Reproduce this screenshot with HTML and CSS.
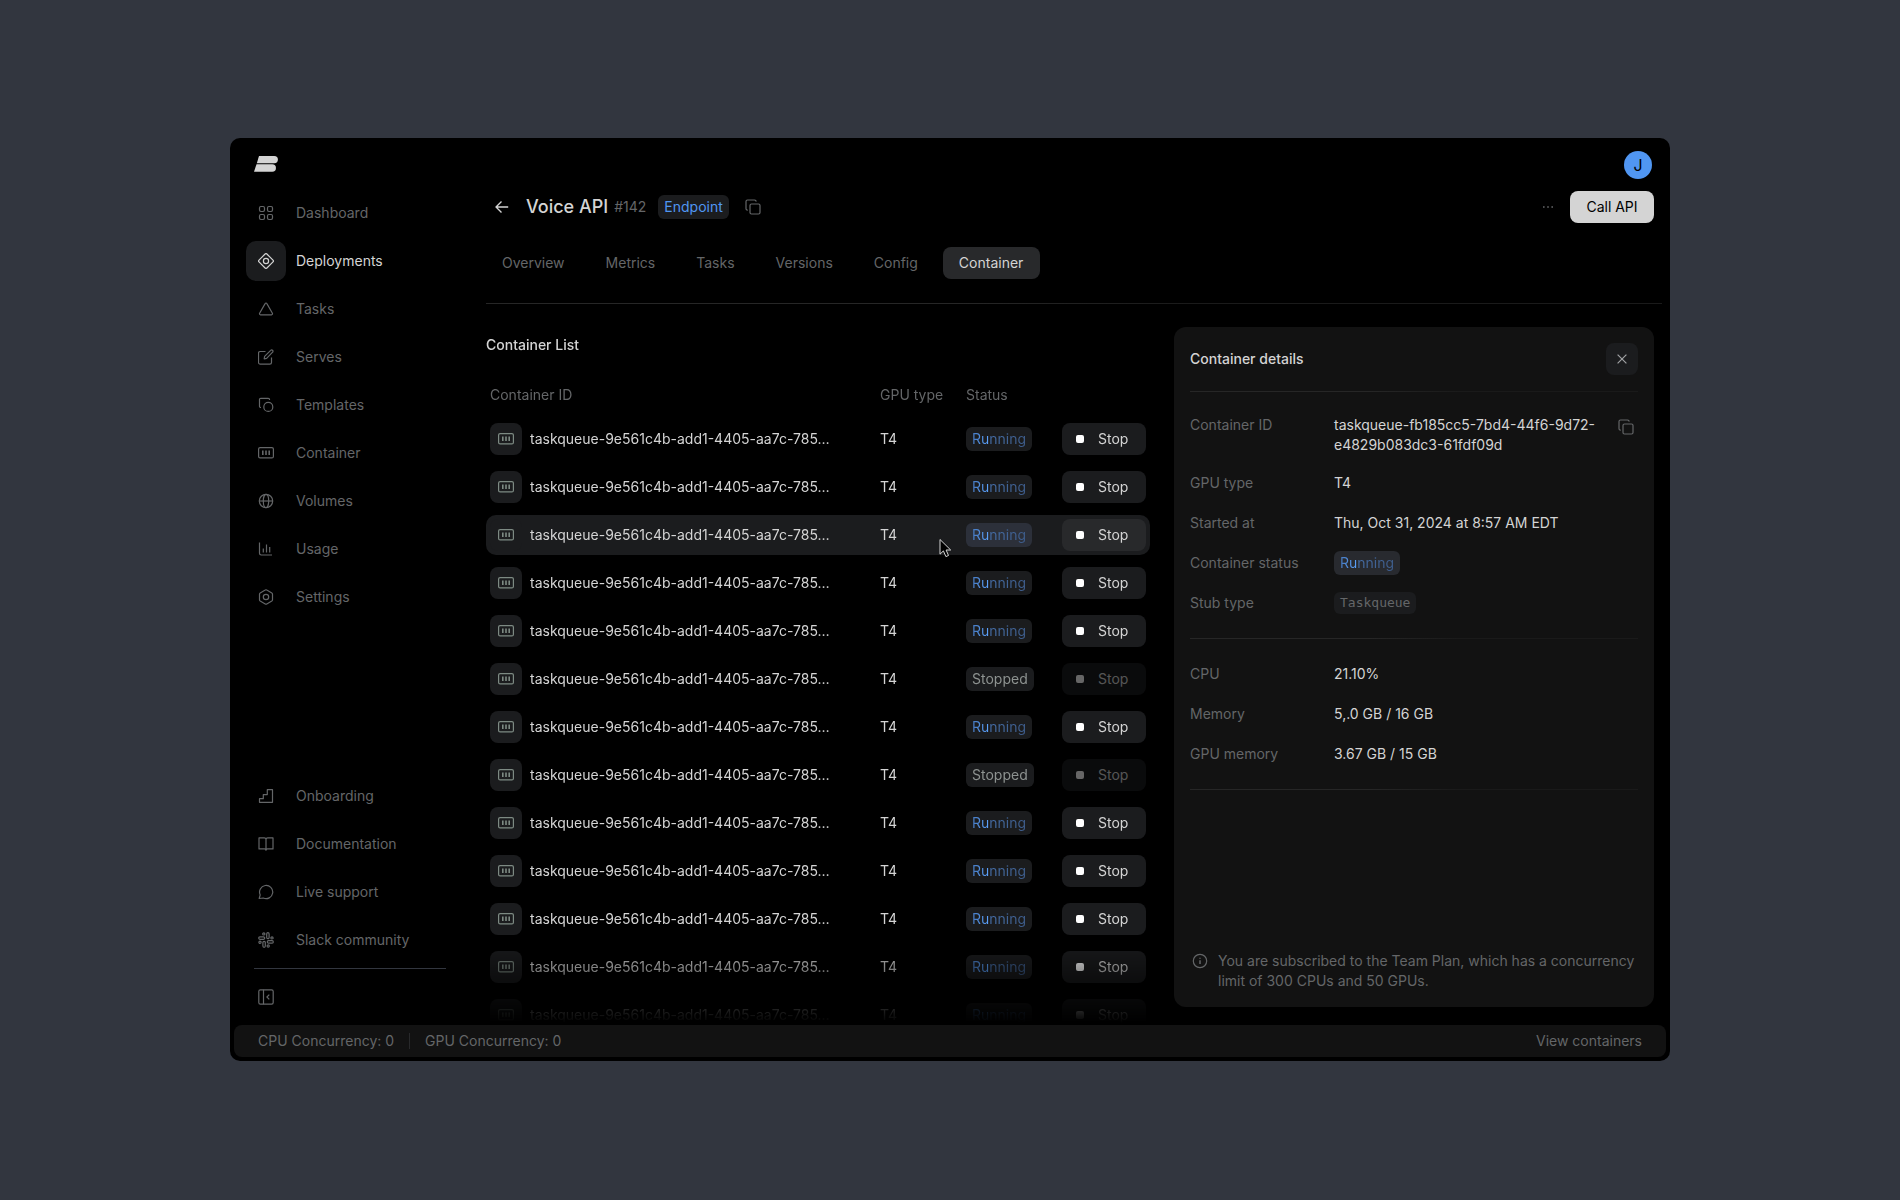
FILE: index.html
```
<!DOCTYPE html>
<html lang="en">
<head>
  <meta charset="UTF-8" />
  <meta name="viewport" content="width=device-width, initial-scale=1.0" />
  <title>Voice API - Container</title>
  <link rel="stylesheet" href="styles.css">
</head>
<body>

  <!-- icon sprite -->
  <svg class="sprite" aria-hidden="true">
    <symbol id="i-dashboard" viewBox="0 0 16 16">
      <rect x="1.5" y="1.5" width="5" height="5" rx="1.4"/><rect x="9.5" y="1.5" width="5" height="5" rx="1.4"/>
      <rect x="1.5" y="9.5" width="5" height="5" rx="1.4"/><rect x="9.5" y="9.5" width="5" height="5" rx="1.4"/>
    </symbol>
    <symbol id="i-deployments" viewBox="0 0 16 16">
      <path d="M7.1 1 1 7.1a1.3 1.3 0 0 0 0 1.8L7.1 15a1.3 1.3 0 0 0 1.8 0L15 8.9a1.3 1.3 0 0 0 0-1.8L8.9 1a1.3 1.3 0 0 0-1.8 0z"/><circle cx="8" cy="8" r="2.6"/>
    </symbol>
    <symbol id="i-tasks" viewBox="0 0 16 16">
      <path d="M7.1 2.6 1.6 12.3a1 1 0 0 0 .9 1.5h11a1 1 0 0 0 .9-1.5L8.9 2.6a1 1 0 0 0-1.8 0z"/>
    </symbol>
    <symbol id="i-serves" viewBox="0 0 16 16">
      <path d="M7.5 2.5H2.2A1.7 1.7 0 0 0 .5 4.2v9.2A1.7 1.7 0 0 0 2.2 15.1h9.6a1.7 1.7 0 0 0 1.7-1.7V8.5"/>
      <path d="m6.2 9.9.4-2.5 6.1-6.1a1.3 1.3 0 0 1 1.9 0 1.3 1.3 0 0 1 0 1.9L8.6 9.4z"/>
    </symbol>
    <symbol id="i-templates" viewBox="0 0 16 16">
      <path d="M3 10.5h-.2A1.3 1.3 0 0 1 1.5 9.2V2.6A1.3 1.3 0 0 1 2.8 1.3h7.4A1.3 1.3 0 0 1 11.5 2.6v.5"/><circle cx="10.3" cy="9.9" r="4.5"/>
    </symbol>
    <symbol id="i-container" viewBox="0 0 16 16">
      <rect x=".6" y="2.6" width="14.8" height="10.3" rx="1.5"/><path d="M4.8 5.5v4.5M8 5.5v4.5M11.2 5.5v4.5" stroke-width="1.6"/>
    </symbol>
    <symbol id="i-volumes" viewBox="0 0 16 16">
      <circle cx="8" cy="8" r="6.7"/><ellipse cx="8" cy="8" rx="2.7" ry="6.7"/><path d="M1.3 8h13.4"/>
    </symbol>
    <symbol id="i-usage" viewBox="0 0 16 16">
      <path d="M1.5 1.5v10.8A1.7 1.7 0 0 0 3.2 14h10.8M5.3 7.5v4M8.5 3.5v8M11.7 6v5.5"/>
    </symbol>
    <symbol id="i-settings" viewBox="0 0 16 16">
      <path d="M7.2 1.1 2.2 3.9a1.5 1.5 0 0 0-.7 1.3v5.6a1.5 1.5 0 0 0 .7 1.3l5 2.8a1.5 1.5 0 0 0 1.6 0l5-2.8a1.5 1.5 0 0 0 .7-1.3V5.2a1.5 1.5 0 0 0-.7-1.3l-5-2.8a1.5 1.5 0 0 0-1.6 0z"/><circle cx="8" cy="8" r="2.7"/>
    </symbol>
    <symbol id="i-onboarding" viewBox="0 0 16 16">
      <path d="M1.5 14.3v-3.6h3.8V6.6h4V1.7h5.2v12.6z"/>
    </symbol>
    <symbol id="i-docs" viewBox="0 0 16 16">
      <path d="M8 3.4A1.7 1.7 0 0 0 6.3 1.9H1v11h5.5A1.6 1.6 0 0 1 8 14.3a1.6 1.6 0 0 1 1.5-1.4H15v-11H9.7A1.7 1.7 0 0 0 8 3.4zV14"/>
    </symbol>
    <symbol id="i-chat" viewBox="0 0 16 16">
      <path d="M1.2 14.5l1-3.6A6.6 6.6 0 1 1 5.3 14z"/>
    </symbol>
    <symbol id="i-slack" viewBox="0 0 16 16">
      <rect x="8.7" y=".7" width="2.4" height="6" rx="1.2"/><rect x="4.9" y="9.3" width="2.4" height="6" rx="1.2"/>
      <rect x=".7" y="4.9" width="6" height="2.4" rx="1.2"/><rect x="9.3" y="8.7" width="6" height="2.4" rx="1.2"/>
      <circle cx="5.8" cy="1.9" r="1.1"/><circle cx="14" cy="5.9" r="1.1"/><circle cx="10.2" cy="14" r="1.1"/><circle cx="2" cy="10.2" r="1.1"/>
    </symbol>
    <symbol id="i-collapse" viewBox="0 0 16 16">
      <rect x=".8" y=".8" width="14.4" height="14.4" rx="1.6"/><path d="M5.500.8v14.400M11.300 5.600 8.900 8l2.400 2.400"/>
    </symbol>
    <symbol id="i-copy" viewBox="0 0 16 16">
      <rect x="5" y="5" width="10" height="10" rx="1.5"/><path d="M2.8 11A1.5 1.5 0 0 1 1 9.5v-7A1.5 1.5 0 0 1 2.5 1h7A1.5 1.5 0 0 1 11 2.7"/>
    </symbol>
    <symbol id="i-back" viewBox="0 0 16 16">
      <path d="M14.2 8H2M7.5 2.5 2 8l5.5 5.5"/>
    </symbol>
    <symbol id="i-close" viewBox="0 0 16 16">
      <path d="m3.6 3.6 8.8 8.8M12.4 3.6l-8.8 8.8"/>
    </symbol>
    <symbol id="i-info" viewBox="0 0 16 16">
      <circle cx="8" cy="8" r="6.7"/><path d="M8 7.3v3.8M8 4.7v1" stroke-width="1.5"/>
    </symbol>
    <symbol id="i-more" viewBox="0 0 16 16">
      <path d="M3 8h1.6M7.2 8h1.6M11.400 8H13" stroke-width="1.6"/>
    </symbol>
  </svg>

  <div class="window">
    <div class="layout">
      <aside class="sidebar">
        <svg class="logo" viewBox="0 0 24 16" role="img" aria-label="Home">
          <path d="M5 0h15.3a3.6 3.6 0 0 1 0 7.2H2.8z"/><path d="M2.5 8.3h15.7a3.7 3.7 0 0 1 0 7.5H0z"/>
        </svg>
        <nav class="nav">
          <a class="nav-item" href="#"><span class="nav-icon"><svg class="icon"><use href="#i-dashboard"/></svg></span>Dashboard</a>
          <a class="nav-item active" href="#"><span class="nav-icon"><svg class="icon"><use href="#i-deployments"/></svg></span>Deployments</a>
          <a class="nav-item" href="#"><span class="nav-icon"><svg class="icon"><use href="#i-tasks"/></svg></span>Tasks</a>
          <a class="nav-item" href="#"><span class="nav-icon"><svg class="icon"><use href="#i-serves"/></svg></span>Serves</a>
          <a class="nav-item" href="#"><span class="nav-icon"><svg class="icon"><use href="#i-templates"/></svg></span>Templates</a>
          <a class="nav-item" href="#"><span class="nav-icon"><svg class="icon"><use href="#i-container"/></svg></span>Container</a>
          <a class="nav-item" href="#"><span class="nav-icon"><svg class="icon"><use href="#i-volumes"/></svg></span>Volumes</a>
          <a class="nav-item" href="#"><span class="nav-icon"><svg class="icon"><use href="#i-usage"/></svg></span>Usage</a>
          <a class="nav-item" href="#"><span class="nav-icon"><svg class="icon"><use href="#i-settings"/></svg></span>Settings</a>
        </nav>
        <nav class="nav nav-bottom">
          <a class="nav-item" href="#"><span class="nav-icon"><svg class="icon"><use href="#i-onboarding"/></svg></span>Onboarding</a>
          <a class="nav-item" href="#"><span class="nav-icon"><svg class="icon"><use href="#i-docs"/></svg></span>Documentation</a>
          <a class="nav-item" href="#"><span class="nav-icon"><svg class="icon"><use href="#i-chat"/></svg></span>Live support</a>
          <a class="nav-item" href="#"><span class="nav-icon"><svg class="icon"><use href="#i-slack"/></svg></span>Slack community</a>
        </nav>
        <button class="collapse" type="button" aria-label="Collapse sidebar"><svg class="icon"><use href="#i-collapse"/></svg></button>
      </aside>

      <main class="main">
        <div class="topbar"><button class="avatar" type="button">J</button></div>

        <header class="header">
          <button class="icon-btn" type="button" aria-label="Back"><svg class="icon back"><use href="#i-back"/></svg></button>
          <h1>Voice API</h1>
          <span class="version">#142</span>
          <span class="badge badge-endpoint">Endpoint</span>
          <button class="icon-btn" type="button" aria-label="Copy"><svg class="icon"><use href="#i-copy"/></svg></button>
          <div class="header-actions">
            <button class="icon-btn" type="button" aria-label="More"><svg class="icon"><use href="#i-more"/></svg></button>
            <button class="call-btn" type="button">Call API</button>
          </div>
        </header>

        <nav class="tabs">
          <a class="tab" href="#">Overview</a>
          <a class="tab" href="#">Metrics</a>
          <a class="tab" href="#">Tasks</a>
          <a class="tab" href="#">Versions</a>
          <a class="tab" href="#">Config</a>
          <a class="tab active" href="#">Container</a>
        </nav>
        <hr class="divider">

        <div class="content">
          <section class="list">
            <h2>Container List</h2>
            <table class="table">
              <thead>
                <tr><th class="col-id">Container ID</th><th class="col-gpu">GPU type</th><th class="col-status">Status</th><th class="col-action"></th></tr>
              </thead>
              <tbody id="rows"></tbody>
            </table>
          </section>

          <aside class="panel">
            <div class="panel-head">
              <h2>Container details</h2>
              <button class="close-btn" type="button" aria-label="Close"><svg class="icon"><use href="#i-close"/></svg></button>
            </div>
            <hr class="divider">
            <dl class="details">
              <div class="detail">
                <dt>Container ID</dt>
                <dd>taskqueue-fb185cc5-7bd4-44f6-9d72-<wbr>e4829b083dc3-61fdf09d</dd>
                <dd class="detail-copy"><button class="icon-btn" type="button" aria-label="Copy ID"><svg class="icon"><use href="#i-copy"/></svg></button></dd>
              </div>
              <div class="detail"><dt>GPU type</dt><dd>T4</dd></div>
              <div class="detail"><dt>Started at</dt><dd>Thu, Oct 31, 2024 at 8:57 AM EDT</dd></div>
              <div class="detail"><dt>Container status</dt><dd><span class="badge badge-light"><span class="shine">Running</span></span></dd></div>
              <div class="detail"><dt>Stub type</dt><dd><span class="badge badge-code">Taskqueue</span></dd></div>
            </dl>
            <hr class="divider">
            <dl class="details">
              <div class="detail"><dt>CPU</dt><dd>21.10%</dd></div>
              <div class="detail"><dt>Memory</dt><dd>5,.0 GB / 16 GB</dd></div>
              <div class="detail"><dt>GPU memory</dt><dd>3.67 GB / 15 GB</dd></div>
            </dl>
            <hr class="divider">
            <div class="note">
              <svg class="icon"><use href="#i-info"/></svg>
              <p>You are subscribed to the Team Plan, which has a concurrency limit of 300 CPUs and 50 GPUs.</p>
            </div>
          </aside>
        </div>
      </main>
    </div>

    <footer class="statusbar">
      <span>CPU Concurrency: 0</span>
      <span class="sep"></span>
      <span>GPU Concurrency: 0</span>
      <a class="view-link" href="#">View containers</a>
    </footer>
  </div>

  <script>
    const rows = document.getElementById("rows");
    const id = "taskqueue-9e561c4b-add1-4405-aa7c-785…";
    const stopped = [5, 7];
    const hovered = 2;

    const cursor = `<svg class="cursor" viewBox="0 0 13 20"><path d="M1 1.5v14.7l3.4-3.3 2.5 5.7 2.6-1.1-2.4-5.5h4.6z"/></svg>`;

    for (let i = 0; i < 13; i++) {
      const off = stopped.includes(i);
      const tr = document.createElement("tr");
      if (i === hovered) tr.className = "hover";
      tr.innerHTML = `
        <td><div class="id-cell"><span class="tile"><svg class="icon"><use href="#i-container"/></svg></span>${id}</div></td>
        <td class="gpu-cell">T4${i === hovered ? cursor : ""}</td>
        <td>${off ? '<span class="badge">Stopped</span>' : '<span class="badge"><span class="shine">Running</span></span>'}</td>
        <td><button class="stop-btn" type="button" ${off ? "disabled" : ""}><span class="stop-icon"></span>Stop</button></td>`;
      rows.appendChild(tr);
    }
  </script>
</body>
</html>
```

FILE: styles.css
```
* {
  box-sizing: border-box;
  margin: 0;
}
body {
  height: 100vh;
  padding: 138px 230px 139px;
  background: #32363f;
  color: #d4d4d4;
  font-family: Inter, sans-serif;
  font-size: 14px;
  line-height: 20px;
}
button {
  font: inherit;
  color: inherit;
  border: 0;
  padding: 0;
  background: none;
  cursor: pointer;
}
a {
  color: inherit;
  text-decoration: none;
}
h2 {
  font-size: 14px;
  font-weight: 500;
}
.sprite {
  position: absolute;
  width: 0;
  height: 0;
}
.icon {
  display: block;
  flex: none;
  width: 16px;
  height: 16px;
  fill: none;
  stroke: currentColor;
  stroke-width: 1.2;
  stroke-linejoin: round;
}
.window {
  display: flex;
  flex-direction: column;
  height: 100%;
  min-height: 800px;
  padding: 4px;
  background: #000;
  border-radius: 10px;
}
.layout {
  display: flex;
  flex: 1;
  min-height: 0;
}

/* sidebar */
.sidebar {
  display: flex;
  flex-direction: column;
  width: 232px;
  padding: 14px 12px 8px;
  color: #646668;
}
.logo {
  width: 24px;
  height: 16px;
  margin: 0 8px 21px;
  fill: #d4d4d4;
}
.nav {
  display: flex;
  flex-direction: column;
  gap: 8px;
}
.nav-item {
  display: flex;
  align-items: center;
  gap: 10px;
}
.nav-icon {
  display: flex;
  align-items: center;
  justify-content: center;
  width: 40px;
  height: 40px;
  border-radius: 10px;
}
.nav-item.active {
  color: #d4d4d4;
}
.active .nav-icon {
  background: #1b1c1e;
}
.nav-bottom {
  margin-top: auto;
}
.nav-bottom::after {
  content: "";
  height: 1px;
  margin: 0 8px;
  background: #32363f;
}
.collapse {
  display: flex;
  align-items: center;
  justify-content: center;
  width: 40px;
  height: 40px;
  margin-top: 8px;
}

/* main */
.main {
  display: flex;
  flex-direction: column;
  flex: 1;
  min-width: 0;
  padding: 9px 4px 0 20px;
}
.topbar {
  display: flex;
  justify-content: flex-end;
  padding-right: 10px;
}
.avatar {
  width: 28px;
  height: 28px;
  border-radius: 50%;
  background: #5096f2;
  color: #000;
  font-size: 16px;
}
.header {
  display: flex;
  align-items: center;
  margin: 12px 8px 24px 0;
}
.header h1 {
  margin: 0 6px 0 8px;
  font-size: 18px;
  line-height: 24px;
  font-weight: 500;
}
.icon-btn {
  display: flex;
  align-items: center;
  justify-content: center;
  width: 32px;
  height: 32px;
  color: #646668;
}
.back {
  color: #d4d4d4;
  stroke-width: 1.4;
}
.version {
  margin-right: 12px;
  color: #646668;
}
.badge {
  display: inline-block;
  height: 24px;
  padding: 2px 6px;
  border-radius: 6px;
  background: #1b1c1e;
  color: #8d9290;
}
.badge-endpoint {
  margin-right: 8px;
  color: #5096f2;
}
.badge-light {
  background: #282a2f;
}
.badge-code {
  height: 22px;
  padding: 1px 6px;
  background: #1b1c1e;
  color: #646668;
  font-family: "DejaVu Sans Mono", monospace;
  font-size: 13px;
}
.shine {
  background: linear-gradient(90deg, #4678bd, #5a9ff8 29%, #446ca4 31%, #3d5b88);
  background-clip: text;
  -webkit-background-clip: text;
  color: transparent;
}
.header-actions {
  display: flex;
  gap: 6px;
  margin-left: auto;
}
.call-btn {
  min-width: 84px;
  height: 32px;
  padding: 0 16px;
  border-radius: 8px;
  background: #d4d4d4;
  color: #000;
}
.tabs {
  display: flex;
  gap: 8px;
  margin-bottom: 24px;
}
.tab {
  padding: 6px 17px 6px 16px;
  border-radius: 8px;
  color: #646668;
}
.tab.active {
  background: #28292b;
  color: #d4d4d4;
}
.divider {
  flex: none;
  height: 1px;
  border: 0;
  background: linear-gradient(90deg, #262626 40%, #1a1a1a 60%);
}
.content {
  display: flex;
  gap: 24px;
  flex: 1;
  min-height: 0;
  padding: 23px 8px 0 0;
}

/* container list */
.list {
  flex: 1;
  min-width: 0;
  padding-top: 8px;
  overflow: hidden;
  mask-image: linear-gradient(#000 calc(100% - 92px), transparent calc(100% - 2px));
}
.list h2 {
  margin-bottom: 16px;
}
.table {
  width: 100%;
  table-layout: fixed;
  border-spacing: 0 8px;
}
.table th {
  height: 32px;
  padding: 0 4px;
  color: #646668;
  font-weight: 400;
  text-align: left;
}
.table td {
  height: 40px;
  padding: 0 4px;
}
.col-gpu { width: 86px; }
.col-status { width: 96px; }
.col-action { width: 92px; }
.id-cell {
  display: flex;
  align-items: center;
  gap: 8px;
  white-space: nowrap;
}
.tile {
  display: flex;
  align-items: center;
  justify-content: center;
  width: 32px;
  height: 32px;
  border-radius: 8px;
  background: #1b1c1e;
  color: #7d8a83;
}
.gpu-cell {
  position: relative;
}
.cursor {
  position: absolute;
  top: 23px;
  left: 63px;
  width: 13px;
  height: 20px;
  fill: #000;
  stroke: #d4d4d4;
}
.stop-btn {
  display: flex;
  align-items: center;
  gap: 14px;
  width: 84px;
  height: 32px;
  padding: 0 14px;
  border-radius: 8px;
  background: #1b1c1e;
}
.stop-icon {
  width: 8px;
  height: 8px;
  border-radius: 2px;
  background: #fff;
}
.stop-btn:disabled {
  opacity: 0.4;
  cursor: default;
}
.hover td {
  background: #1b1c1e;
}
.hover td:first-child {
  border-radius: 10px 0 0 10px;
}
.hover td:last-child {
  border-radius: 0 10px 10px 0;
}
.hover .badge {
  background: #2c303a;
}
.hover .stop-btn {
  background: #28292b;
}

/* details panel */
.panel {
  display: flex;
  flex-direction: column;
  width: 480px;
  margin-bottom: 18px;
  padding: 16px;
  border-radius: 12px;
  background: #121212;
}
.panel-head {
  display: flex;
  align-items: center;
  justify-content: space-between;
  margin-bottom: 16px;
}
.close-btn {
  display: flex;
  align-items: center;
  justify-content: center;
  width: 32px;
  height: 32px;
  border-radius: 8px;
  background: #1b1c1e;
  color: #a0a2a4;
}
.details {
  display: flex;
  flex-direction: column;
  gap: 16px;
  padding: 23px 0;
}
.detail {
  display: flex;
  align-items: center;
  min-height: 24px;
}
.detail:has(.detail-copy) {
  align-items: flex-start;
}
.detail dt {
  width: 144px;
  flex: none;
  color: #646668;
}
.detail dd {
  min-width: 0;
}
.detail .detail-copy {
  flex: none;
  margin: -4px -4px 0 auto;
}
.note {
  display: flex;
  gap: 10px;
  margin-top: auto;
  padding-left: 2px;
  color: #646668;
}
.note .icon {
  margin-top: 2px;
}

/* status bar */
.statusbar {
  display: flex;
  align-items: center;
  gap: 15px;
  height: 32px;
  padding: 0 24px;
  border-radius: 8px;
  background: #121212;
  color: #646668;
}
.sep {
  width: 1px;
  height: 16px;
  background: #28292b;
}
.view-link {
  margin-left: auto;
}
```
